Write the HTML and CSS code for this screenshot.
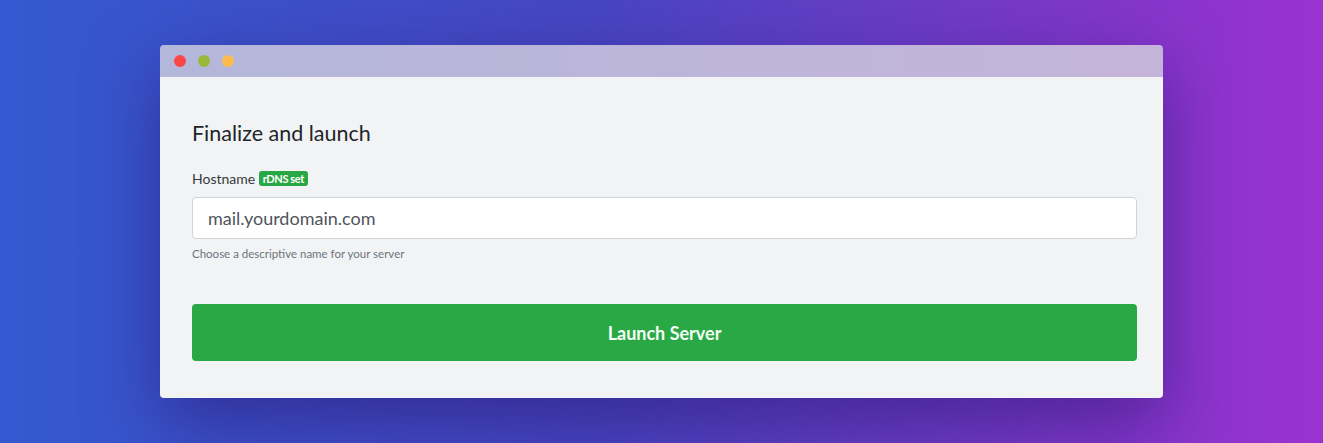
FILE: index.html
```html
<!DOCTYPE html>
<html>
<head>
  <title>Finalize and launch</title>
  <link rel="stylesheet" href="styles.css">
</head>
<body>
  <div class="window">
    <div class="titlebar">
      <span class="dot red"></span>
      <span class="dot green"></span>
      <span class="dot yellow"></span>
    </div>
    <div class="content">
      <h2>Finalize and launch</h2>
      <div class="form-group">
        <label for="hostname">Hostname <span class="badge">rDNS set</span></label>
        <input type="text" id="hostname" placeholder="mail.yourdomain.com">
        <small class="help">Choose a descriptive name for your server</small>
      </div>
      <button type="button" class="launch">Launch Server</button>
    </div>
  </div>
</body>
</html>
```

FILE: styles.css
```css
/* page */
html, body {
  height: 100%;
}

body {
  margin: 0;
  padding-top: 45px;
  box-sizing: border-box;
  font-family: Lato, "Open Sans", sans-serif;
  background: linear-gradient(90deg, #3459d0 0%, #4746c2 45%, #7c38c8 80%, #9a32d1 100%);
  overflow: hidden;
}

.window {
  width: 1003px;
  margin: 0 auto;
  border-radius: 4px;
  overflow: hidden;
  box-shadow: 0 25px 70px rgba(40, 20, 110, 0.55);
}

.titlebar {
  height: 32px;
  display: flex;
  align-items: center;
  gap: 12px;
  padding-left: 14px;
  background: linear-gradient(90deg, #b3b7da, #c5b4da);
}

.dot {
  width: 12px;
  height: 12px;
  border-radius: 50%;
}

.red { background-color: #fc4545; }
.green { background-color: #9ab93a; }
.yellow { background-color: #fdba4f; }

.content {
  background-color: #f2f3f5;
  padding: 44px 26px 37px 32px;
}

h2 {
  margin: 0 0 23px;
  font-size: 21.5px;
  font-weight: 400;
  line-height: 25px;
  color: #212529;
}

.form-group {
  margin-bottom: 42px;
}

label {
  display: block;
  font-size: 14px;
  line-height: 19px;
  color: #343a40;
  margin-bottom: 9px;
}

.badge {
  display: inline-block;
  background-color: #28a745;
  color: #fff;
  font-size: 11px;
  font-weight: 700;
  letter-spacing: -0.4px;
  line-height: 15px;
  padding: 0 4px;
  border-radius: 3px;
  vertical-align: 1px;
}

input[type="text"] {
  display: block;
  width: 100%;
  height: 42px;
  box-sizing: border-box;
  padding: 0 15px;
  font-family: inherit;
  font-size: 18px;
  color: #495057;
  background-color: #fff;
  border: 1px solid #ced4da;
  border-radius: 4px;
}

input::placeholder {
  color: #4f555b;
}

.help {
  display: block;
  margin-top: 7px;
  font-size: 11.5px;
  line-height: 16px;
  color: #6c757d;
}

button.launch {
  display: block;
  width: 100%;
  height: 57px;
  border: none;
  border-radius: 4px;
  background-color: #2aa845;
  color: #f4fff6;
  font-family: inherit;
  font-size: 18px;
  font-weight: 700;
  cursor: pointer;
}
```
